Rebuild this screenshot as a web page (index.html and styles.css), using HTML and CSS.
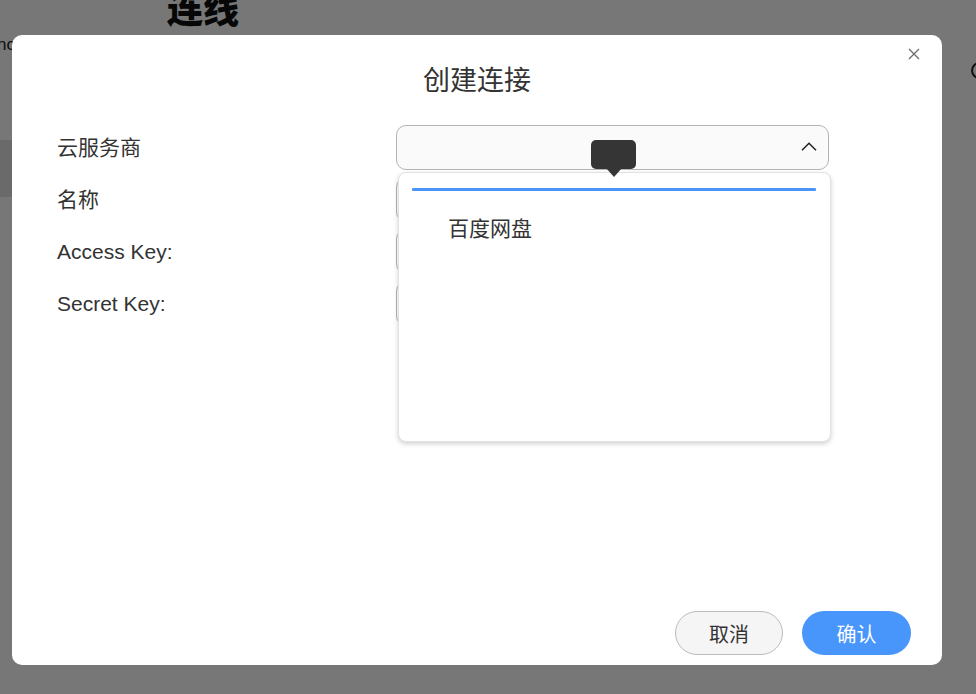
FILE: index.html
```html
<!DOCTYPE html>
<html lang="zh-CN">
<head>
<meta charset="utf-8">
<title>创建连接</title>
<link rel="stylesheet" href="styles.css">
</head>
<body>
<div class="page">
  <div class="page-head">
    <h1 class="page-title">连线</h1>
  </div>
  <div class="page-sub">
    <span class="page-sub-text">nc</span>
    <span class="info-ring"></span>
  </div>
  <div class="side-item"></div>
</div>

<div class="overlay">
  <div class="modal">
    <button class="close" aria-label="关闭">
      <svg width="12" height="12" viewBox="0 0 12 12"><path d="M1 1L11 11M11 1L1 11" stroke="#6b6b6b" stroke-width="1.3" fill="none"/></svg>
    </button>
    <div class="modal-title">创建连接</div>
    <div class="form">
      <div class="label">云服务商</div>
      <div class="field">
        <div class="select">
          <svg class="chev" width="16" height="9" viewBox="0 0 16 9"><path d="M1 8.2L8 1.2L15 8.2" stroke="#222" stroke-width="1.5" fill="none"/></svg>
        </div>
        <div class="tip"></div>
        <div class="dropdown">
          <div class="dd-bar"></div>
          <div class="dd-item">百度网盘</div>
        </div>
      </div>
      <div class="label">名称</div>
      <div class="field"><div class="input"></div></div>
      <div class="label latin">Access Key:</div>
      <div class="field"><div class="input"></div></div>
      <div class="label latin">Secret Key:</div>
      <div class="field"><div class="input"></div></div>
    </div>
    <div class="footer">
      <button class="btn btn-cancel">取消</button>
      <button class="btn btn-ok">确认</button>
    </div>
  </div>
</div>
</body>
</html>
```

FILE: styles.css
```css
* { box-sizing: border-box; }
html, body { margin: 0; padding: 0; }
body {
  width: 976px;
  height: 694px;
  overflow: hidden;
  background: #ffffff;
  font-family: "Liberation Sans", "Noto Sans CJK SC", sans-serif;
  color: #333;
}

/* background page */
.page { height: 694px; }
.page-head { height: 35px; padding-left: 167px; overflow: hidden; }
.page-title {
  margin: -13px 0 0 0;
  font-size: 36px;
  line-height: 40px;
  font-weight: 900;
  color: #111;
  font-family: "Noto Sans CJK SC", sans-serif;
}
.page-sub {
  display: flex;
  justify-content: space-between;
  align-items: flex-start;
  height: 105px;
  margin-left: -3px;
  margin-right: -12px;
}
.page-sub-text { font-size: 17px; line-height: 20px; color: #222; }
.info-ring {
  margin-top: 27px;
  width: 17px;
  height: 17px;
  border: 2px solid #222;
  border-radius: 50%;
}
.side-item { width: 200px; height: 57px; background: #e3e3e3; }

/* overlay */
.overlay {
  position: fixed;
  inset: 0;
  background: rgba(0, 0, 0, 0.533);
  padding: 35px 0 0 12px;
}
.modal {
  position: relative;
  width: 930px;
  height: 630px;
  background: #fff;
  border-radius: 10px;
  display: flex;
  flex-direction: column;
}
.close {
  position: absolute;
  top: 12px;
  right: 21px;
  width: 14px;
  height: 14px;
  padding: 1px;
  border: 0;
  background: transparent;
  display: flex;
  align-items: center;
  justify-content: center;
}
.modal-title {
  padding-top: 27px;
  font-size: 27px;
  line-height: 34px;
  text-align: center;
  color: #333;
  font-family: "Noto Sans CJK SC", sans-serif;
}
.form {
  margin-top: 29px;
  padding-left: 45px;
  display: grid;
  grid-template-columns: 339px 433px;
  grid-auto-rows: 45px;
  row-gap: 7px;
}
.label {
  display: flex;
  align-items: center;
  font-size: 21px;
  color: #333;
  padding-bottom: 3px;
  font-family: "Noto Sans CJK SC", sans-serif;
}
.label.latin { font-family: "Liberation Sans", sans-serif; font-size: 21px; padding-bottom: 0; padding-top: 1px; }
.field { position: relative; }
.select {
  height: 45px;
  border: 1px solid #b4b4b4;
  border-radius: 10px;
  background: #fafafa;
  display: flex;
  justify-content: flex-end;
  align-items: center;
  padding-right: 11px;
  padding-bottom: 2px;
}
.input {
  height: 45px;
  border: 1px solid #b4b4b4;
  border-radius: 10px;
  background: #fff;
}
.tip {
  position: absolute;
  left: 195px;
  top: 15px;
  width: 45px;
  height: 29px;
  background: #353535;
  border-radius: 5px;
  z-index: 3;
}
.tip::after {
  content: "";
  position: absolute;
  left: 15px;
  top: 28px;
  border-left: 8px solid transparent;
  border-right: 8px solid transparent;
  border-top: 9px solid #353535;
}
.dropdown {
  position: absolute;
  left: 2px;
  top: 47px;
  width: 433px;
  height: 270px;
  background: #fff;
  border: 1px solid #e2e2e2;
  border-radius: 8px;
  box-shadow: 0 2px 5px rgba(0, 0, 0, 0.18);
  padding: 15px 14px 0 13px;
  z-index: 2;
}
.dd-bar { height: 3px; background: #4a94fa; border-radius: 1px; }
.dd-item {
  margin-top: 22px;
  padding-left: 36px;
  font-size: 21px;
  line-height: 28px;
  color: #333;
  font-family: "Noto Sans CJK SC", sans-serif;
}
.footer {
  margin-top: auto;
  display: flex;
  justify-content: flex-end;
  gap: 19px;
  padding: 0 31px 10px 0;
}
.btn {
  height: 44px;
  border-radius: 22px;
  font-size: 20px;
  font-family: "Noto Sans CJK SC", sans-serif;
  padding: 0;
}
.btn-cancel {
  width: 108px;
  background: #f5f5f5;
  border: 1px solid #bcbcbc;
  color: #333;
}
.btn-ok {
  width: 109px;
  background: #4895fb;
  border: 0;
  color: #fff;
}
```
